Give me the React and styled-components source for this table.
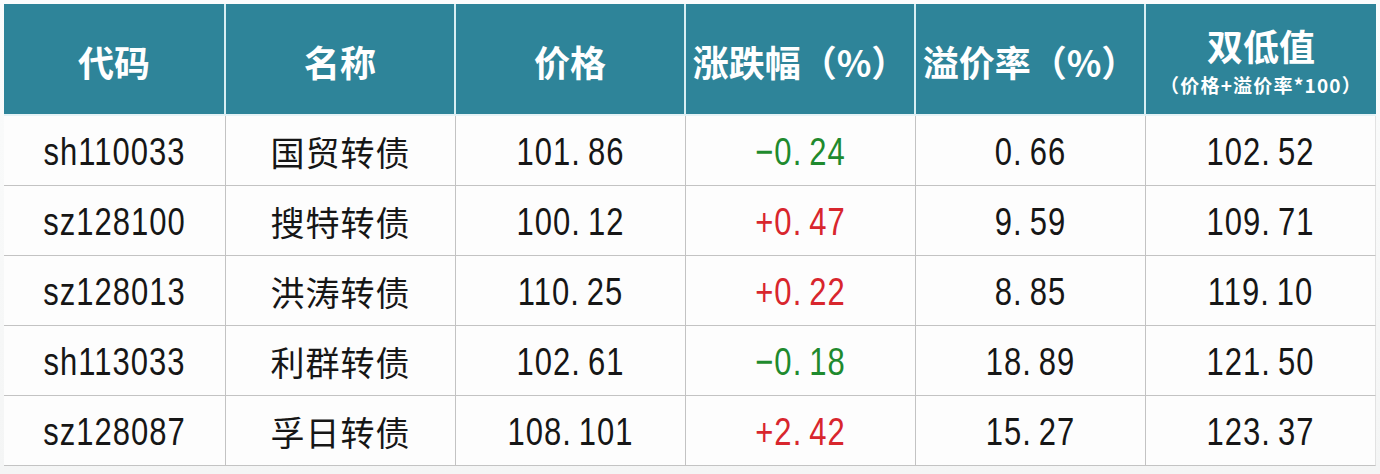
import React from "react";
import styled, { createGlobalStyle } from "styled-components";

const Global = createGlobalStyle`
  html, body { margin: 0; padding: 0; background: #f4f5f5; }
  body { font-family: "Noto Sans CJK SC", "Noto Sans", sans-serif; }
`;

const Page = styled.div`
  width: 1380px;
  height: 474px;
  padding: 4px 4px 0 4px;
  box-sizing: border-box;
  background: linear-gradient(#fbfcfc, #f4f5f5);
`;

const Table = styled.div`
  display: grid;
  grid-template-columns: 222px repeat(5, 230px);
  grid-template-rows: 112px repeat(5, 70px);
  background: #fdfdfd;
`;

const HeadCell = styled.div`
  background: #2e8499;
  color: #ffffff;
  display: flex;
  flex-direction: column;
  align-items: center;
  justify-content: center;
  border-right: ${(p) => (p.$last ? "none" : "2px solid #d8eef3")};
  border-bottom: 2px solid #e6f3f6;
  box-sizing: border-box;
  font-family: "Noto Sans CJK SC", sans-serif;
  font-weight: 700;
`;

const HeadTitle = styled.span`
  display: inline-block;
  font-size: 36px;
  line-height: 1;
  white-space: nowrap;
  margin-top: ${(p) => p.$mt || 4}px;
`;

const HeadSub = styled.span`
  display: inline-block;
  font-size: 19px;
  line-height: 1;
  margin-top: 12px;
  white-space: nowrap;
  letter-spacing: 1.2px;
`;

const Cell = styled.div`
  display: flex;
  align-items: center;
  justify-content: center;
  border-right: ${(p) => (p.$last ? "1px solid #e2e2e2" : "1px solid #c3c3c3")};
  border-bottom: 1px solid #c3c3c3;
  box-sizing: border-box;
  color: ${(p) => (p.$tone === "up" ? "#d8262d" : p.$tone === "down" ? "#1f8a2e" : "#161616")};
`;

const Latin = styled.span`
  display: inline-block;
  font-family: "Liberation Sans", Arial, sans-serif;
  font-size: 31px;
  line-height: 1;
  letter-spacing: 1px;
  white-space: nowrap;
  transform: scaleY(1.26);
  margin-top: 2px;
`;

const Dot = styled.span`
  margin-right: 7px;
`;

const Han = styled.span`
  display: inline-block;
  font-family: "Noto Sans CJK SC", sans-serif;
  font-size: 34px;
  line-height: 1;
  letter-spacing: 1px;
  white-space: nowrap;
  margin-top: 2px;
`;

const rows = [
  ["sh110033", "国贸转债", "101.86", "-0.24", "0.66", "102.52"],
  ["sz128100", "搜特转债", "100.12", "+0.47", "9.59", "109.71"],
  ["sz128013", "洪涛转债", "110.25", "+0.22", "8.85", "119.10"],
  ["sh113033", "利群转债", "102.61", "-0.18", "18.89", "121.50"],
  ["sz128087", "孚日转债", "108.101", "+2.42", "15.27", "123.37"],
];

function Num({ value }) {
  const [a, b] = value.split(".");
  const shown = a.replace("-", "\u2212");
  return (
    <Latin>
      {shown}
      <Dot>.</Dot>
      {b}
    </Latin>
  );
}

export default function App() {
  return (
    <>
      <Global />
      <Page>
        <Table>
          <HeadCell><HeadTitle>代码</HeadTitle></HeadCell>
          <HeadCell><HeadTitle>名称</HeadTitle></HeadCell>
          <HeadCell><HeadTitle>价格</HeadTitle></HeadCell>
          <HeadCell><HeadTitle>涨跌幅（%）</HeadTitle></HeadCell>
          <HeadCell><HeadTitle>溢价率（%）</HeadTitle></HeadCell>
          <HeadCell $last>
            <HeadTitle $mt={2}>双低值</HeadTitle>
            <HeadSub>（价格+溢价率*100）</HeadSub>
          </HeadCell>
          {rows.map((r) => {
            const tone = r[3].startsWith("-") ? "down" : "up";
            return (
              <React.Fragment key={r[0]}>
                <Cell><Latin>{r[0]}</Latin></Cell>
                <Cell><Han>{r[1]}</Han></Cell>
                <Cell><Num value={r[2]} /></Cell>
                <Cell $tone={tone}><Num value={r[3]} /></Cell>
                <Cell><Num value={r[4]} /></Cell>
                <Cell $last><Num value={r[5]} /></Cell>
              </React.Fragment>
            );
          })}
        </Table>
      </Page>
    </>
  );
}
